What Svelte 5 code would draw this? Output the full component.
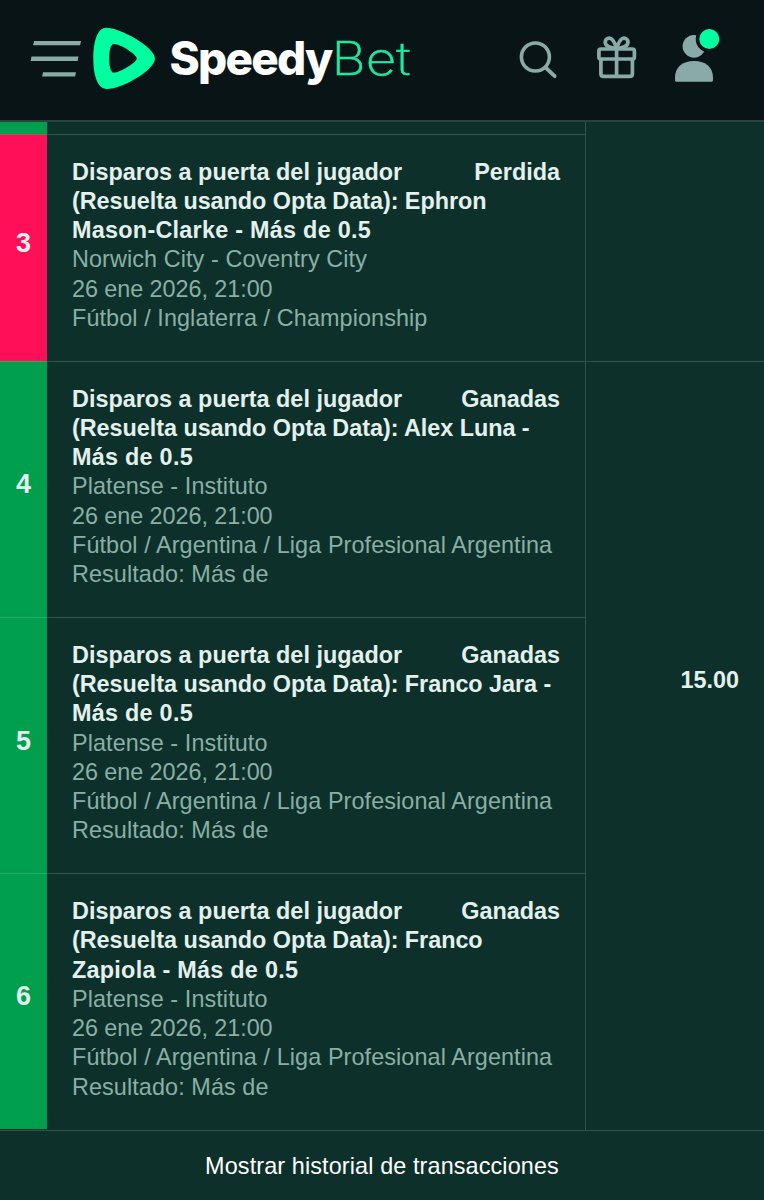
<script lang="ts">
  type Selection = {
    no: number;
    player: string;
    rest: string;
    match: string;
    date: string;
    league: string;
    result?: string;
    won: boolean;
  };

  const selections: Selection[] = [
    {
      no: 3,
      player: "Ephron",
      rest: "Mason-Clarke - Más de 0.5",
      match: "Norwich City - Coventry City",
      date: "26 ene 2026, 21:00",
      league: "Fútbol / Inglaterra / Championship",
      won: false,
    },
    {
      no: 4,
      player: "Alex Luna -",
      rest: "Más de 0.5",
      match: "Platense - Instituto",
      date: "26 ene 2026, 21:00",
      league: "Fútbol / Argentina / Liga Profesional Argentina",
      result: "Más de",
      won: true,
    },
    {
      no: 5,
      player: "Franco Jara -",
      rest: "Más de 0.5",
      match: "Platense - Instituto",
      date: "26 ene 2026, 21:00",
      league: "Fútbol / Argentina / Liga Profesional Argentina",
      result: "Más de",
      won: true,
    },
    {
      no: 6,
      player: "Franco",
      rest: "Zapiola - Más de 0.5",
      match: "Platense - Instituto",
      date: "26 ene 2026, 21:00",
      league: "Fútbol / Argentina / Liga Profesional Argentina",
      result: "Más de",
      won: true,
    },
  ];
</script>

<main class="page">
  <header class="topbar">
    <svg class="brand" width="384" height="72" viewBox="0 0 384 72">
      <g fill="#8aaaa7">
        <path d="M4 17h47l-.9 4.300h-47z" />
        <path d="M1.500 32.600h47l-.9 4.400h-47z" />
        <path d="M13 48.200h33l-.9 4.400h-33z" />
      </g>
      <path
        fill="#00ffa0"
        fill-rule="evenodd"
        d="M76 3.700C90 3.700 125 23 125 34.500S92 65 77 65C67 65 63.300 50 63.300 34.500S67 3.700 76 3.700z
          M84 20C80.500 20 79.200 27 79.200 34.500S80.500 48.700 84 48.700C89.500 48.700 106.800 38.500 106.800 34.500S90.500 20 84 20z"
      />
      <text class="speedy" x="139.500" y="51.300" textLength="162" lengthAdjust="spacingAndGlyphs">Speedy</text>
      <text class="bet" x="301.500" y="51.300" textLength="79" lengthAdjust="spacingAndGlyphs">Bet</text>
    </svg>

    <nav class="actions">
      <svg width="40" height="40" viewBox="0 0 40 40" fill="none" stroke="#8aaaa7">
        <circle cx="17.400" cy="18" r="14" stroke-width="3.600" />
        <path d="M27.500 28.500l9.200 8.700" stroke-width="3.800" stroke-linecap="round" />
      </svg>
      <svg width="42" height="46" viewBox="0 0 42 46" fill="none" stroke="#8aaaa7" stroke-width="3.700">
        <rect x="2.900" y="15" width="35.500" height="10" rx="2" />
        <path d="M4.900 25v14.700c0 1.700 1 2.700 2.700 2.700h26.100c1.700 0 2.700-1 2.700-2.700V25M20.600 15v27.400" />
        <path d="M20.600 14.500C18.900 9 16.700 4.200 13.300 4.200c-2.400 0-4.100 1.500-4.100 3.900 0 3.400 3.700 5.900 11.400 6.400M20.600 14.500C22.300 9 24.500 4.200 27.900 4.200c2.400 0 4.100 1.500 4.100 3.900 0 3.400-3.700 5.900-11.400 6.400" />
      </svg>
      <svg width="48" height="56" viewBox="0 0 48 56">
        <circle cx="20" cy="19.300" r="11.400" fill="#8aaaa7" />
        <path fill="#8aaaa7" d="M1 53v-2.500C1 40.500 8 34 20 34s19 6.500 19 16.500V53c0 1.200-.6 1.800-1.800 1.800H2.800C1.600 54.800 1 54.200 1 53z" />
        <circle cx="35.300" cy="12" r="13.600" fill="#081416" />
        <circle cx="35.300" cy="12" r="10" fill="#00ffa0" />
      </svg>
    </nav>
  </header>

  <section class="slip">
    <div class="selections">
      <div class="row previous">
        <div class="number won"></div>
        <div class="details"></div>
      </div>
      {#each selections as item (item.no)}
        <div class="row" class:short={!item.result}>
          <div class="number" class:won={item.won} class:lost={!item.won}>{item.no}</div>
          <div class="details">
            <div class="title">
              <span>Disparos a puerta del jugador</span>
              <span>{item.won ? "Ganadas" : "Perdida"}</span>
            </div>
            <div class="title market">(Resuelta usando Opta Data): {item.player}</div>
            <div class="title rest">{item.rest}</div>
            <div class="event">{item.match}</div>
            <div class="date">{item.date}</div>
            <div class="event">{item.league}</div>
            {#if item.result}
              <div class="event">Resultado: {item.result}</div>
            {/if}
          </div>
        </div>
      {/each}
    </div>
    <div class="odds">
      <div class="odds-cell"></div>
      <div class="odds-cell total">15.00</div>
    </div>
  </section>

  <button class="history">Mostrar historial de transacciones</button>
</main>

<style>
  :global(body) {
    background: #0d312a;
  }
  .page {
    height: 1200px;
    overflow: hidden;
    display: flex;
    flex-direction: column;
    background: #0d312a;
    color: #e3f0ed;
    font-family: "Liberation Sans", Arial, sans-serif;
    font-size: 23.4px;
    line-height: 29.25px;
  }
  .topbar {
    box-sizing: border-box;
    flex: none;
    height: 122px;
    padding: 0 48px 0 30px;
    display: flex;
    align-items: flex-start;
    justify-content: space-between;
    background: #081416;
    border-bottom: 2px solid #29443f;
  }
  .brand {
    margin-top: 24px;
  }
  .speedy,
  .bet {
    font-family: Inter, "Open Sans", sans-serif;
    font-size: 46px;
  }
  .speedy {
    font-weight: 800;
    letter-spacing: -1.8px;
    fill: #fff;
  }
  .bet {
    font-weight: 200;
    fill: #1de9a0;
    stroke: #1de9a0;
    stroke-width: 0.5px;
  }
  .actions {
    display: flex;
    align-items: flex-start;
    padding-top: 27px;
  }
  .actions svg:nth-child(1) {
    margin: 12px 38px 0 0;
  }
  .actions svg:nth-child(2) {
    margin: 7px 36px 0 0;
  }
  .actions svg:nth-child(3) {
    margin-right: -6px;
  }
  .slip {
    flex: none;
    display: grid;
    grid-template-columns: 586px 1fr;
    height: 1009px;
    border-bottom: 1px solid #31554c;
    box-sizing: border-box;
  }
  .selections {
    border-right: 1px solid #31554c;
  }
  .row {
    display: grid;
    grid-template-columns: 47px 1fr;
    height: 256.3px;
  }
  .row.short {
    height: 227px;
  }
  .row.previous {
    height: 11.8px;
  }
  .row + .row .details {
    border-top: 1px solid #31554c;
  }
  .number {
    display: flex;
    align-items: center;
    justify-content: center;
    font-size: 27px;
    font-weight: 700;
    padding-bottom: 9px;
  }
  .number.won {
    background: #009f4e;
  }
  .number.lost {
    background: #ff0f57;
  }
  .row + .row .number {
    border-top: 1px solid #25ac67;
  }
  .row + .row .number.lost {
    border-top-color: #8a6a5c;
  }
  .row:last-child .number {
    margin-bottom: 1px;
  }
  .details {
    padding: 0 25px;
    color: #8aafa5;
    white-space: nowrap;
  }
  .row + .row .details {
    padding-top: 22.8px;
  }
  .title {
    display: flex;
    justify-content: space-between;
    color: #e3f0ed;
    font-weight: 700;
  }
  .title.market {
    letter-spacing: -0.04px;
  }
  .title.rest {
    letter-spacing: 0.26px;
  }
  .event {
    letter-spacing: 0.09px;
  }
  .date {
    letter-spacing: -0.06px;
  }
  .odds {
    display: grid;
    grid-template-rows: 239px 1fr;
  }
  .odds-cell.total {
    display: flex;
    align-items: center;
    justify-content: flex-end;
    padding: 0 25px 131px 0;
    border-top: 1px solid #31554c;
    font-weight: 700;
  }
  .history {
    flex: 1;
    padding: 3px 0 0;
    border: 0;
    background: none;
    color: #fff;
    font: inherit;
    letter-spacing: 0.12px;
    cursor: pointer;
  }
</style>
